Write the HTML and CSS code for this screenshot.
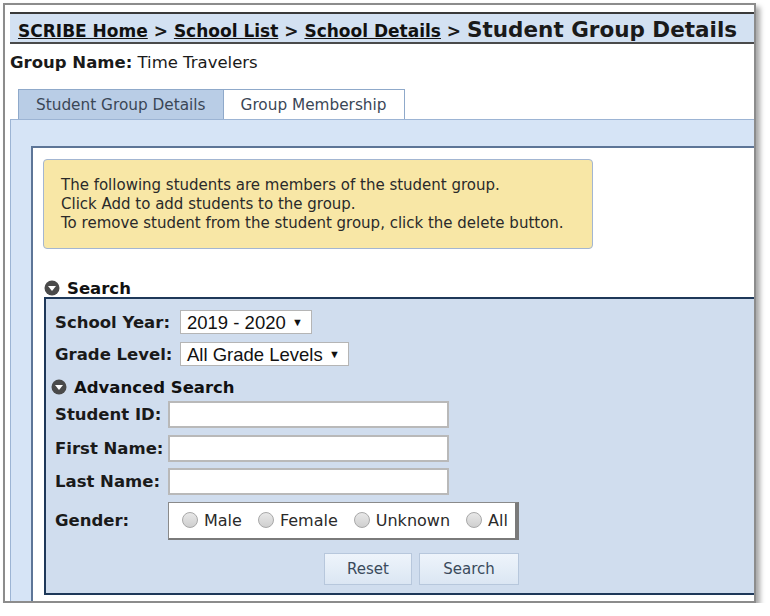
FILE: index.html
```html
<!DOCTYPE html>
<html lang="en">
<head>
    <meta charset="UTF-8">
    <title>Student Group Details</title>
    <link rel="stylesheet" href="styles.css">
</head>
<body>
    <div class="frame">
        <div class="crumbs">
            <a href="#">SCRIBE Home</a> &gt; <a href="#">School List</a> &gt; <a href="#">School Details</a> &gt; <span class="current">Student Group Details</span>
        </div>
        <div class="group-name"><b>Group Name:</b> Time Travelers</div>
        <div class="tabs">
            <div class="tab">Student Group Details</div>
            <div class="tab active">Group Membership</div>
        </div>
        <div class="panel">
            <div class="inner">
                <div class="msg">
                    The following students are members of the student group.<br>
                    Click Add to add students to the group.<br>
                    To remove student from the student group, click the delete button.
                </div>
                <div class="section-head">
                    <svg class="toggle" viewBox="0 0 16 16" width="16" height="16"><circle cx="8" cy="8" r="7.5" fill="#4a4a4a"/><path d="M4 6 L12 6 L8 11 Z" fill="#fff"/></svg>
                    <span>Search</span>
                </div>
                <div class="search">
                    <div class="row">
                        <label>School Year:</label>
                        <div class="select">2019 - 2020 <span class="caret">&#9660;</span></div>
                    </div>
                    <div class="row">
                        <label>Grade Level:</label>
                        <div class="select">All Grade Levels <span class="caret">&#9660;</span></div>
                    </div>
                    <div class="section-head adv">
                        <svg class="toggle" viewBox="0 0 16 16" width="16" height="16"><circle cx="8" cy="8" r="7.5" fill="#4a4a4a"/><path d="M4 6 L12 6 L8 11 Z" fill="#fff"/></svg>
                        <span>Advanced Search</span>
                    </div>
                    <div class="fields">
                        <label>Student ID:</label>
                        <div class="input"></div>
                        <label>First Name:</label>
                        <div class="input"></div>
                        <label>Last Name:</label>
                        <div class="input"></div>
                        <label>Gender:</label>
                        <div class="radios">
                            <span class="radio"><i></i>Male</span>
                            <span class="radio"><i></i>Female</span>
                            <span class="radio"><i></i>Unknown</span>
                            <span class="radio"><i></i>All</span>
                        </div>
                    </div>
                    <div class="buttons">
                        <div class="btn reset">Reset</div>
                        <div class="btn go">Search</div>
                    </div>
                </div>
            </div>
        </div>
    </div>
</body>
</html>
```

FILE: styles.css
```css
body {
    margin: 0;
    background-color: #fff;
    font-family: "DejaVu Sans", Verdana, sans-serif;
    color: #1a1a1a;
}
.frame {
    margin: 3px 0 0 3px;
    width: 749px;
    height: 596px;
    border: 2px solid #8c8c8c;
    background-color: #fff;
    box-shadow: 4px 4px 5px rgba(0, 0, 0, 0.35);
    overflow: hidden;
}
.crumbs {
    margin: 7px 0 0 5px;
    height: 28px;
    padding-left: 8px;
    border-top: 2px solid #3a3a3a;
    border-bottom: 2px solid #4a4a4a;
    background-color: #d3e1f2;
    font-size: 17px;
    font-weight: bold;
    line-height: 32px;
    white-space: nowrap;
}
.crumbs a {
    color: #111;
}
.crumbs .current {
    font-size: 21.5px;
}
.group-name {
    padding: 9px 0 0 5px;
    font-size: 16.5px;
    line-height: 20px;
}
.tabs {
    display: flex;
    margin: 16px 0 0 13px;
}
.tab {
    height: 29px;
    padding: 0 17px;
    border: 1px solid #8fa9ca;
    border-bottom: none;
    background-color: #b9cde6;
    color: #3a4656;
    font-size: 15.3px;
    line-height: 30px;
}
.tab.active {
    border-left: none;
    background-color: #fff;
}
.panel {
    margin-left: 5px;
    height: 500px;
    border-left: 1px solid #9cb4d4;
    border-top: 1px solid #9cb4d4;
    background-color: #d6e4f6;
    padding: 26px 0 0 20px;
}
.inner {
    height: 470px;
    border: 2px solid #5d7597;
    border-right: none;
    background-color: #fff;
    padding: 11px 0 0 10px;
}
.msg {
    width: 531px;
    height: 72px;
    padding: 16px 0 0 17px;
    border: 1px solid #a3b6d2;
    border-radius: 4px;
    background-color: #f8e7a6;
    font-size: 15px;
    line-height: 19px;
    color: #2a2a2a;
}
.section-head {
    display: flex;
    align-items: center;
    gap: 7px;
    margin: 30px 0 0 1px;
    height: 18px;
    font-size: 16.5px;
    font-weight: bold;
    color: #111;
}
.search {
    margin-left: 1px;
    height: 283px;
    border: 2px solid #1e3859;
    border-right: none;
    background-color: #d0ddee;
    padding: 11px 0 0 9px;
}
.row {
    display: flex;
    align-items: center;
    height: 24px;
    margin-bottom: 8px;
}
label {
    font-size: 16.5px;
    font-weight: bold;
    color: #1a1a1a;
}
.row label {
    width: 125px;
}
.select {
    height: 22px;
    padding: 0 8px 0 6px;
    border: 1px solid #b5b5b5;
    background-color: #fff;
    font-family: "Liberation Sans", Arial, sans-serif;
    font-size: 18.5px;
    line-height: 22px;
    color: #111;
}
.caret {
    font-size: 11px;
    vertical-align: 3px;
    margin-left: 1px;
}
.section-head.adv {
    margin: 12px 0 0 -4px;
}
.fields {
    display: grid;
    grid-template-columns: 113px 281px;
    grid-template-rows: 27px 27px 27px 38px;
    row-gap: 6.5px;
    align-items: center;
    margin-top: 5px;
}
.input {
    height: 23px;
    border: 2px solid #b9b9b9;
    background-color: #fff;
}
.fields .radios {
    display: flex;
    align-items: center;
    width: 333px;
    height: 35px;
    padding-left: 13px;
    border: 1px solid #8a8a8a;
    border-right: 4px solid #7a7a7a;
    border-bottom: 2px solid #7a7a7a;
    background-color: #fff;
    font-size: 16px;
}
.radio {
    display: flex;
    align-items: center;
    margin-right: 16px;
    color: #2a2a2a;
}
.radio i {
    display: inline-block;
    width: 14px;
    height: 14px;
    margin-right: 6px;
    border: 1px solid #a8a8a8;
    border-radius: 50%;
    background: linear-gradient(#e8e8e8, #cfcfcf);
}
.buttons {
    display: flex;
    gap: 7px;
    margin: 13px 0 0 269px;
}
.btn {
    height: 30px;
    border: 1px solid #b7c7dc;
    background: linear-gradient(#eef4fb, #dbe6f3);
    color: #3a4a5c;
    font-size: 15px;
    line-height: 30px;
    text-align: center;
}
.btn.reset {
    width: 86px;
}
.btn.go {
    width: 98px;
}
```
